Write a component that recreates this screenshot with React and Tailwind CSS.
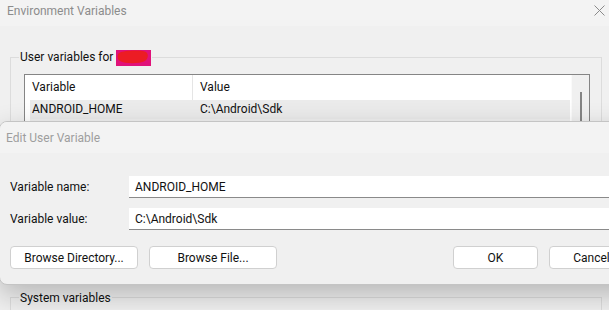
import React from "react";

const font = { fontFamily: "Roboto, 'Liberation Sans', sans-serif" };

function CloseIcon() {
    return (
        <svg width="11" height="11" viewBox="0 0 11 11" className="text-[#8a8a8a]">
            <path d="M0.5 0.5 L10.5 10.5 M10.5 0.5 L0.5 10.5" stroke="currentColor" strokeWidth="1" fill="none" />
        </svg>
    );
}

function Redacted() {
    return (
        <svg width="35" height="16" viewBox="0 0 35 16" className="inline-block align-middle">
            <rect x="0" y="0" width="35" height="16" fill="#e0127a" />
            <path d="M3 3 C9 0 25 0 30 2 C33 4 32 9 29 11 C23 14 9 14 4 11 C1 9 1 5 3 3 Z" fill="#ec1c24" />
        </svg>
    );
}

function Button({children, className}) {
    return (
        <button className={"h-[23px] bg-white border border-[#d0d0d0] rounded-[4px] text-[12px] text-[#111] flex items-center justify-center " + className}>
            {children}
        </button>
    );
}

export default function App() {
    return (
        <div className="relative w-[609px] h-[310px] overflow-hidden bg-[#f0f0f0] text-[12px]" style={font}>

            {/* Environment Variables window (behind) */}
            <div className="h-[26px] bg-[#f3f3f3] flex items-start justify-between">
                <span className="pl-[7px] pt-[3px] leading-[16px] text-[#8c8c8c]">Environment Variables</span>
                <span className="pt-[5px] pr-[4px]"><CloseIcon /></span>
            </div>

            <fieldset className="mt-[23px] ml-[10px] w-[592px] border border-[#dcdcdc] pb-[12px]">
                <legend className="ml-[8px] px-[1px] leading-[16px] text-[#111]">
                    User variables for <Redacted />
                </legend>
                <div className="mt-[8px] ml-[13px] w-[566px] h-[190px] border border-[#858585] flex">
                    <div className="flex-1 flex flex-col bg-white">
                        <div className="h-[25px] flex items-center text-[#111]">
                            <div className="w-[168px] pl-[7px] h-full flex items-center border-r border-[#e5e5e5]">Variable</div>
                            <div className="pl-[7px]">Value</div>
                        </div>
                        <div className="flex-1 pl-[5px] pr-[1px] bg-white">
                            <div className="h-[19px] bg-[#ebebeb] flex items-center text-[#111]">
                                <div className="w-[163px] pl-[2px]">ANDROID_HOME</div>
                                <div className="pl-[7px]">C:\Android\Sdk</div>
                            </div>
                            <div className="h-full bg-[#f0f0f0]"></div>
                        </div>
                    </div>
                    <div className="w-[18px] bg-[#f0f0f0] border-l border-[#fafafa] pt-[17px] flex justify-center">
                        <div className="w-[2px] h-full bg-[#858585]"></div>
                    </div>
                </div>
            </fieldset>

            <fieldset className="mt-[13px] ml-[10px] w-[592px] h-[40px] border border-[#dcdcdc]">
                <legend className="ml-[8px] px-[1px] leading-[16px] text-[#111]">System variables</legend>
            </fieldset>

            {/* Edit User Variable dialog (overlay) */}
            <div className="absolute top-[121px] left-[-1px] w-[650px] h-[164px] rounded-[8px] border border-[#c4c4c4] bg-[#f0f0f0] overflow-hidden shadow-[0_10px_28px_rgba(0,0,0,0.24)]">
                <div className="h-[31px] bg-[#f3f3f3] pl-[6px] pt-[8px] leading-[16px] text-[#9e9e9e]">Edit User Variable</div>

                <div className="mt-[23px] flex items-center">
                    <div className="w-[129px] pl-[10px] text-[#111]">Variable name:</div>
                    <div className="w-[500px] h-[22px] bg-white border-b border-[#8a8a8a] flex items-center pl-[6px] text-[#111]">ANDROID_HOME</div>
                </div>
                <div className="mt-[10px] flex items-center">
                    <div className="w-[129px] pl-[10px] text-[#111]">Variable value:</div>
                    <div className="w-[500px] h-[22px] bg-white border-b border-[#8a8a8a] flex items-center pl-[6px] text-[#111]">C:\Android\Sdk</div>
                </div>

                <div className="mt-[16px] flex pl-[10px]">
                    <Button className="w-[128px]">Browse Directory...</Button>
                    <Button className="w-[128px] ml-[11px]">Browse File...</Button>
                    <Button className="w-[85px] ml-[176px]">OK</Button>
                    <Button className="w-[85px] ml-[11px]">Cancel</Button>
                </div>
            </div>
        </div>
    );
}
